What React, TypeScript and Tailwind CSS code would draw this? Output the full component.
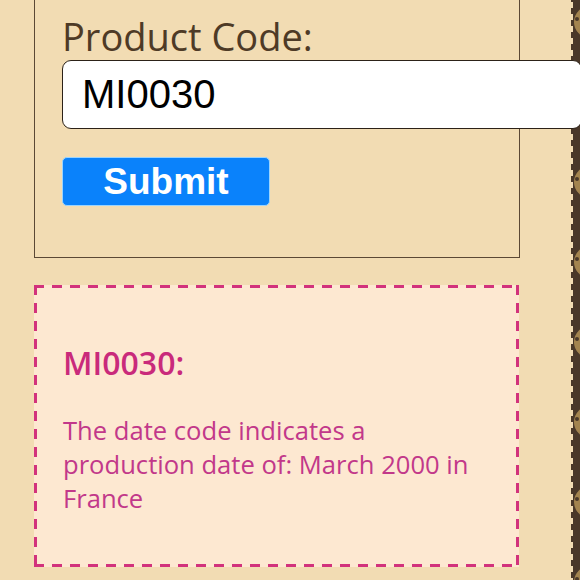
import React from "react";

const cookieYs = [22, 102, 182, 262, 342, 422, 502, 582];

function CookieEdge() {
  const notches = Array.from({ length: 49 }, (_, i) => i * 12 + 2);
  return (
    <svg width="10" height="580" viewBox="0 0 10 580" className="block shrink-0">
      <rect x="1" y="0" width="9" height="580" fill="#4a3829" />
      {notches.map((y) => (
        <rect key={y} x="0" y={y} width="3" height="6" fill="#f2dcb3" />
      ))}
      {cookieYs.map((y) => (
        <g key={y}>
          <circle cx="20" cy={y} r="16" fill="#a3844f" />
          <circle cx="7" cy={y - 3} r="2" fill="#4a3829" />
        </g>
      ))}
    </svg>
  );
}

export default function App() {
  return (
    <div className="flex h-[580px] w-[580px] overflow-hidden bg-[#f2dcb3] font-['Open_Sans',sans-serif]">
      <div className="flex w-[570px] shrink-0 flex-col pl-[34px]">
        <section className="w-[486px] border border-t-0 border-[#5b4835] pb-[51px] pl-[27px] pt-[12px]">
          <label className="block text-[38px] leading-[48px] text-[#4e3a26]">Product Code:</label>
          <input
            readOnly
            value="MI0030"
            className="relative z-10 mt-0 block h-[69px] w-[520px] rounded-[9px] border border-[#2c2218] bg-white pl-[19px] font-['Liberation_Sans',sans-serif] text-[40px] text-black outline-none"
          />
          <button className="mt-[28px] block h-[49px] w-[208px] rounded-[5px] border border-[#9ad4ff] bg-[#0a82fb] font-['Liberation_Sans',sans-serif] text-[37px] font-bold leading-none text-white">
            Submit
          </button>
        </section>
        <section className="mt-[27px] h-[282px] w-[485px] bg-[#fde8d1] bg-no-repeat px-[29px] pt-[58px] text-[#c2388a] [background-image:repeating-linear-gradient(90deg,#d2327c_0_10px,transparent_10px_18px),repeating-linear-gradient(90deg,#d2327c_0_10px,transparent_10px_18px),repeating-linear-gradient(180deg,#d2327c_0_10px,transparent_10px_18px),repeating-linear-gradient(180deg,#d2327c_0_10px,transparent_10px_18px)] [background-position:left_top,left_bottom,left_top,right_top] [background-size:100%_3px,100%_3px,3px_100%,3px_100%]">
          <h2 className="text-[32px] font-semibold leading-[40px] text-[#c92a7b]">MI0030:</h2>
          <p className="mt-[31px] w-[420px] text-[25.6px] leading-[34px]">
            The date code indicates a production date of: March 2000 in France
          </p>
        </section>
      </div>
      <CookieEdge />
    </div>
  );
}
